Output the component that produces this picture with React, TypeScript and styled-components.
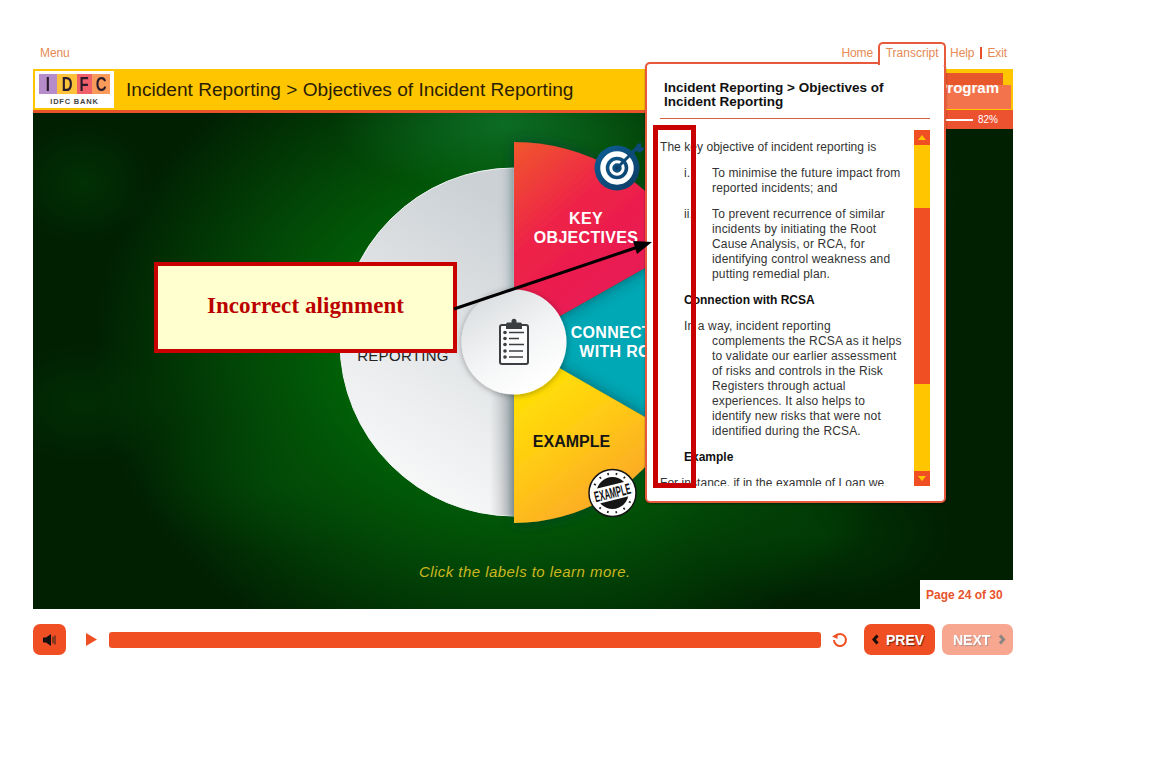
import React from "react";
import styled, { createGlobalStyle } from "styled-components";

const Global = createGlobalStyle`
  html, body { margin: 0; padding: 0; background: #fff; }
  body { font-family: "Liberation Sans", Arial, sans-serif; overflow: hidden; }
`;

const Shell = styled.div`
  position: relative;
  width: 980px;
  height: 763px;
  margin-left: 33px;
  display: flex;
  flex-direction: column;
`;

const TopNav = styled.nav`
  height: 69px;
  box-sizing: border-box;
  padding: 42px 6px 0 7px;
  display: flex;
  justify-content: space-between;
  align-items: flex-start;
`;

const NavGroup = styled.div`
  display: flex;
  align-items: flex-start;
  position: relative;
  z-index: 4;
`;

const NavLink = styled.a<{ $divider?: boolean }>`
  font-size: 12px;
  line-height: 14px;
  padding-top: 4px;
  color: #e58a55;
  letter-spacing: -0.1px;
  ${(p) => p.$divider && `
    padding: 0 0 0 5px;
    margin-top: 5px;
    margin-left: 6px;
    border-left: 2px solid #e8502a;
    line-height: 12px;
  `}
`;

const TranscriptTab = styled.a`
  box-sizing: border-box;
  width: 68px;
  height: 23px;
  margin: 0 4px 0 5px;
  padding-top: 1px;
  text-align: center;
  font-size: 12px;
  line-height: 17px;
  color: #e58a55;
  background: #fff;
  border: 2px solid #e8583a;
  border-bottom: 0;
  border-radius: 5px 5px 0 0;
`;

const Header = styled.header`
  height: 44px;
  box-sizing: border-box;
  background: #ffc600;
  border-bottom: 3px solid #e8532c;
  padding: 2px;
  display: flex;
  align-items: stretch;
`;

const Logo = styled.div`
  width: 79px;
  background: #fff;
  box-sizing: border-box;
  padding: 3px 4px 0;
  display: flex;
  flex-direction: column;
  align-items: center;
`;

const LogoBlocks = styled.div`
  width: 71px;
  height: 20px;
  display: flex;
`;

const LogoBlock = styled.span<{ $bg: string; $w: number }>`
  width: ${(p) => p.$w}px;
  background: ${(p) => p.$bg};
  display: flex;
  justify-content: center;
`;

const LogoLetter = styled.span`
  display: block;
  color: #2a1a2a;
  font-size: 20px;
  font-weight: 700;
  line-height: 20px;
  transform: scaleX(0.75);
`;

const LogoName = styled.span`
  font-size: 7.5px;
  font-weight: 700;
  line-height: 9px;
  margin-top: 3px;
  letter-spacing: 0.8px;
  color: #444;
`;

const Title = styled.h1`
  margin: 0 0 0 12px;
  padding-top: 1px;
  flex: 1;
  font-size: 19.1px;
  font-weight: 400;
  line-height: 36px;
  color: #2b1d05;
`;

const ProgramTag = styled.div`
  width: 78px;
  height: 36px;
  margin-top: 2px;
  text-align: right;
  padding-right: 12px;
  box-sizing: border-box;
  font-size: 15px;
  font-weight: 700;
  line-height: 29px;
  color: #fff;
  background:
    linear-gradient(#e8562c, #e8562c) 0 0 / 70px 12px no-repeat,
    linear-gradient(#f2734c, #f2734c) 0 12px / 100% 100% no-repeat;
`;

const Stage = styled.main`
  position: relative;
  height: 496px;
  overflow: hidden;
  background:
    radial-gradient(ellipse 170px 70px at 470px 10px, rgba(20, 140, 60, 0.55), transparent),
    radial-gradient(ellipse 70px 60px at 50px 70px, rgba(0, 80, 8, 0.35), transparent),
    radial-gradient(ellipse 90px 60px at 50px 290px, rgba(0, 80, 8, 0.28), transparent),
    radial-gradient(ellipse 130px 70px at 240px 370px, rgba(0, 90, 8, 0.25), transparent),
    radial-gradient(ellipse 130px 70px at 790px 420px, rgba(0, 100, 10, 0.3), transparent),
    radial-gradient(ellipse 110px 90px at 820px 70px, rgba(0, 80, 8, 0.25), transparent),
    radial-gradient(ellipse 420px 340px at 480px 235px, #006a08 0%, #005f07 42%, #024a07 62%, transparent 100%),
    #012002;
`;

const Wheel = styled.svg`
  position: absolute;
  left: 0;
  top: 0;
`;

const WheelLabel = styled.div<{ $x: number; $y: number; $color: string; $weight?: number; $size?: number; $ls?: number }>`
  position: absolute;
  left: ${(p) => p.$x}px;
  top: ${(p) => p.$y}px;
  width: 140px;
  text-align: center;
  font-size: ${(p) => p.$size ?? 16}px;
  line-height: 19px;
  font-weight: ${(p) => p.$weight ?? 700};
  letter-spacing: ${(p) => p.$ls ?? 0.3}px;
  color: ${(p) => p.$color};
`;

const Hint = styled.div`
  position: absolute;
  left: 386px;
  top: 450px;
  font-size: 15px;
  line-height: 18px;
  font-style: italic;
  letter-spacing: 0.45px;
  color: #cdb71f;
`;

const PageBadge = styled.div`
  position: absolute;
  right: 0;
  bottom: 0;
  width: 93px;
  height: 29px;
  box-sizing: border-box;
  padding: 8px 0 0 6px;
  background: #fff;
  color: #e8532c;
  font-size: 12px;
  line-height: 14px;
  font-weight: 700;
`;

const ProgressStrip = styled.div`
  position: absolute;
  left: 912px;
  top: 111px;
  width: 68px;
  height: 18px;
  background: #ec5130;
  color: #fff;
  font-size: 10px;
  line-height: 18px;
  padding-right: 15px;
  box-sizing: border-box;
  display: flex;
  justify-content: flex-end;
  align-items: center;
  gap: 5px;
`;

const ProgressLine = styled.span`
  width: 27px;
  height: 2px;
  background: #fff;
`;

const Controls = styled.footer`
  margin-top: 15px;
  display: flex;
  align-items: center;
  height: 31px;
`;

const MuteButton = styled.button`
  width: 33px;
  height: 31px;
  padding: 0;
  border: 0;
  border-radius: 7px;
  background: #f04f23;
  display: flex;
  align-items: center;
  justify-content: center;
`;

const PlayIcon = styled.svg`
  margin-left: 20px;
  margin-right: 12px;
`;

const SeekBar = styled.div`
  flex: 0 0 712px;
  height: 16px;
  border-radius: 3px;
  background: #f04f23;
`;

const ReloadIcon = styled.svg`
  margin: 0 16px 0 11px;
`;

const NavButton = styled.button<{ $off?: boolean }>`
  width: 71px;
  height: 31px;
  margin-left: ${(p) => (p.$off ? 7 : 0)}px;
  padding: 0 0 0 ${(p) => (p.$off ? 11 : 8)}px;
  border: 0;
  border-radius: 7px;
  background: #f04f23;
  opacity: ${(p) => (p.$off ? 0.5 : 1)};
  display: flex;
  align-items: center;
  gap: ${(p) => (p.$off ? 8 : 7)}px;
  font-family: inherit;
  font-size: 14px;
  font-weight: 700;
  color: #fff;
  text-shadow: 1px 1px 1px rgba(0, 0, 0, 0.55);
`;

const Popup = styled.aside`
  position: absolute;
  left: 612px;
  top: 62px;
  z-index: 3;
  width: 301px;
  height: 441px;
  box-sizing: border-box;
  border: 2px solid #e8583a;
  border-radius: 5px;
  background: #fff;
  box-shadow: 0 1px 2px rgba(0, 0, 0, 0.4);
  padding: 17px 14px 0 13px;
`;

const PopupTitle = styled.h2`
  margin: 0;
  padding: 0 0 9px 4px;
  border-bottom: 1px solid #d2603c;
  font-size: 13.5px;
  line-height: 14px;
  font-weight: 700;
  color: #111;
`;

const PopupBody = styled.div`
  margin-top: 11px;
  display: flex;
  height: 356px;
`;

const TextPane = styled.div`
  flex: 1;
  overflow: hidden;
  font-size: 12px;
  line-height: 15px;
  letter-spacing: 0.15px;
  color: #333;
`;

const Para = styled.p`
  margin: 10px 0 11px;
  letter-spacing: 0.05px;
`;

const ListItem = styled.div`
  display: flex;
  margin: 0 10px 11px 24px;
`;

const ListMark = styled.span`
  flex: 0 0 28px;
`;

const SubHead = styled.p`
  margin: 0 0 11px 24px;
  font-weight: 700;
  letter-spacing: 0;
  color: #111;
`;

const Hanging = styled.p`
  margin: 0 10px 11px 52px;
  text-indent: -28px;
`;

const Scroll = styled.div`
  width: 16px;
  display: flex;
  flex-direction: column;
  background: #ffc600;
`;

const ScrollArrow = styled.div<{ $down?: boolean }>`
  height: 15px;
  background: #f04f23;
  display: flex;
  align-items: center;
  justify-content: center;
  margin-top: ${(p) => (p.$down ? "auto" : 0)};
  &::after {
    content: "";
    border-left: 4px solid transparent;
    border-right: 4px solid transparent;
    ${(p) => (p.$down ? "border-top: 5px solid #ffc600;" : "border-bottom: 5px solid #ffc600;")}
  }
`;

const ScrollThumb = styled.div`
  height: 176px;
  margin-top: 63px;
  background: #f04f23;
`;

const CalloutBox = styled.div`
  position: absolute;
  left: 121px;
  top: 262px;
  z-index: 5;
  width: 303px;
  height: 91px;
  box-sizing: border-box;
  border: 4px solid #c80000;
  background: #ffffcf;
  padding-bottom: 4px;
  display: flex;
  align-items: center;
  justify-content: center;
  font-family: "Liberation Serif", "Times New Roman", serif;
  font-size: 23px;
  font-weight: 700;
  letter-spacing: 0.08px;
  color: #bb0000;
`;

const Highlight = styled.div`
  position: absolute;
  left: 620px;
  top: 125px;
  z-index: 5;
  width: 43px;
  height: 363px;
  box-sizing: border-box;
  border: 5px solid #c80000;
`;

const Arrow = styled.svg`
  position: absolute;
  left: 0;
  top: 0;
  z-index: 6;
  pointer-events: none;
`;

const logoBlocks = [
  { l: "I", bg: "#b58bc9", w: 18 },
  { l: "D", bg: "#fcc23a", w: 20 },
  { l: "F", bg: "#f0606a", w: 15 },
  { l: "C", bg: "#f79a5a", w: 18 },
];

const CX = 481;
const CY = 229;

function WheelArt() {
  return (
    <Wheel width="980" height="496" viewBox="0 0 980 496">
      <defs>
        <linearGradient id="gray" x1="0.6" y1="0" x2="0.3" y2="1">
          <stop offset="0" stopColor="#ccd1d5" />
          <stop offset="0.45" stopColor="#e2e5e7" />
          <stop offset="1" stopColor="#fcfcfc" />
        </linearGradient>
        <linearGradient id="grayEdge" x1="0" y1="0" x2="1" y2="0">
          <stop offset="0" stopColor="#8a8f93" stopOpacity="0" />
          <stop offset="1" stopColor="#8a8f93" stopOpacity="0.6" />
        </linearGradient>
        <linearGradient id="red" x1="0" y1="0" x2="0.55" y2="0.75">
          <stop offset="0" stopColor="#f0582c" />
          <stop offset="0.5" stopColor="#ee2248" />
          <stop offset="1" stopColor="#e81a54" />
        </linearGradient>
        <linearGradient id="yellow" x1="0.05" y1="0.2" x2="0.55" y2="1">
          <stop offset="0" stopColor="#ffe400" />
          <stop offset="0.5" stopColor="#ffc815" />
          <stop offset="1" stopColor="#fba52a" />
        </linearGradient>
        <linearGradient id="hub" x1="0" y1="0" x2="0.6" y2="1">
          <stop offset="0" stopColor="#d4d8db" />
          <stop offset="0.6" stopColor="#f3f4f5" />
          <stop offset="1" stopColor="#ffffff" />
        </linearGradient>
        <filter id="drop" x="-30%" y="-30%" width="160%" height="160%">
          <feDropShadow dx="0" dy="0" stdDeviation="7" floodColor="#00363c" floodOpacity="0.6" />
        </filter>
        <filter id="soft" x="-30%" y="-30%" width="160%" height="160%">
          <feDropShadow dx="0" dy="1" stdDeviation="3" floodColor="#000" floodOpacity="0.35" />
        </filter>
        <linearGradient id="targetBlue" x1="0" y1="0" x2="1" y2="1">
          <stop offset="0" stopColor="#0d5f96" />
          <stop offset="1" stopColor="#0c3c64" />
        </linearGradient>
      </defs>

      <path d={`M${CX} ${CY - 174}A174 174 0 0 0 ${CX} ${CY + 174}Z`} fill="url(#gray)" stroke="#f4f6f7" strokeWidth="1" />
      <path d={`M${CX - 24} ${CY + 40}H${CX}V${CY + 174}L${CX - 24} ${CY + 172}Z`} fill="url(#grayEdge)" />
      <path d={`M${CX} ${CY}L${CX + 165.4} ${CY - 93.4}A190 190 0 0 1 ${CX + 165.4} ${CY + 94.7}Z`} fill="#00a7b4" />
      <path d={`M${CX} ${CY}V${CY - 200}A200 200 0 0 1 ${CX + 174.2} ${CY - 98.4}Z`} fill="url(#red)" filter="url(#drop)" />
      <path d={`M${CX} ${CY}L${CX + 157.2} ${CY + 90}A181 181 0 0 1 ${CX} ${CY + 181}Z`} fill="url(#yellow)" filter="url(#drop)" />
      <circle cx={CX} cy={CY} r="52.5" fill="url(#hub)" filter="url(#soft)" />

      {/* clipboard */}
      <g transform="translate(466 205)" fill="none" stroke="#3c3f42">
        <rect x="1" y="7" width="28" height="39" rx="2" strokeWidth="2" fill="#fbfbfb" />
        <path d="M7 11V6.5C7 5 8 4.5 9 4.5H12.5V3.2a2.5 2.5 0 0 1 5 0V4.5H21C22 4.5 23 5 23 6.5V11Z" fill="#3c3f42" stroke="none" />
        <g fill="#3c3f42" stroke="none">
          <circle cx="6" cy="14.5" r="1.8" />
          <circle cx="6" cy="20.5" r="1.8" />
          <circle cx="6" cy="26.5" r="1.8" />
          <circle cx="6" cy="33" r="1.8" />
          <circle cx="6" cy="39" r="1.8" />
        </g>
        <path d="M10 14.5H25M10 20.5H20M10 26.5H25M10 33H24M10 39H24" strokeWidth="1.5" />
      </g>

      {/* target */}
      <g transform="translate(584 55)">
        <path d="M8 -8L23 -23" stroke="#0d4a78" strokeWidth="3.5" />
        <path d="M18 -18L20 -24L24 -25L24 -21L28 -20L23 -15Z" fill="#0d4a78" />
        <circle r="22.5" fill="url(#targetBlue)" />
        <circle r="14" fill="none" stroke="#fff" strokeWidth="5.5" />
        <circle r="6.2" fill="none" stroke="#fff" strokeWidth="3" />
        <path d="M0 0L17 -17" stroke="#0d4a78" strokeWidth="3" />
        <circle r="1.8" fill="#0c3c64" />
      </g>

      {/* example stamp */}
      <g transform="translate(579.5 380)">
        <circle r="23.5" fill="#fff" />
        <circle r="23.5" fill="none" stroke="#151515" strokeWidth="1.5" />
        <circle r="19.5" fill="none" stroke="#222" strokeWidth="2.2" strokeDasharray="1.6 7" />
        <circle r="16" fill="#151515" />
        <g transform="rotate(-14)">
          <rect x="-20" y="-8" width="40" height="15" fill="#fff" />
          <text
            x="0"
            y="5"
            textAnchor="middle"
            textLength="37"
            lengthAdjust="spacingAndGlyphs"
            fontFamily="'Liberation Sans', sans-serif"
            fontWeight="700"
            fontSize="15"
            fill="#111"
          >
            EXAMPLE
          </text>
        </g>
      </g>
    </Wheel>
  );
}

export default function App() {
  return (
    <>
      <Global />
      <Shell>
        <TopNav>
          <NavGroup>
            <NavLink>Menu</NavLink>
          </NavGroup>
          <NavGroup>
            <NavLink>Home</NavLink>
            <TranscriptTab>Transcript</TranscriptTab>
            <NavLink>Help</NavLink>
            <NavLink $divider>Exit</NavLink>
          </NavGroup>
        </TopNav>

        <Header>
          <Logo>
            <LogoBlocks>
              {logoBlocks.map((b) => (
                <LogoBlock key={b.l} $bg={b.bg} $w={b.w}>
                  <LogoLetter>{b.l}</LogoLetter>
                </LogoBlock>
              ))}
            </LogoBlocks>
            <LogoName>IDFC BANK</LogoName>
          </Logo>
          <Title>Incident Reporting &gt; Objectives of Incident Reporting</Title>
          <ProgramTag>Program</ProgramTag>
        </Header>

        <Stage>
          <WheelArt />
          <WheelLabel $x={300} $y={214} $color="#222" $weight={400} $size={15}>
            INCIDENT
            <br />
            REPORTING
          </WheelLabel>
          <WheelLabel $x={483} $y={96} $color="#fff">
            KEY
            <br />
            OBJECTIVES
          </WheelLabel>
          <WheelLabel $x={523} $y={210} $color="#fff">
            CONNECTION
            <br />
            WITH RCSA
          </WheelLabel>
          <WheelLabel $x={468.5} $y={319} $color="#151515" $ls={0}>
            EXAMPLE
          </WheelLabel>
          <Hint>Click the labels to learn more.</Hint>
          <PageBadge>Page 24 of 30</PageBadge>
        </Stage>

        <Controls>
          <MuteButton aria-label="Mute">
            <svg width="16" height="16" viewBox="0 0 16 16">
              <path d="M1 5.5H4L9 2V14L4 10.5H1Z" fill="#111" />
              <path d="M11 4.5V11.5M13 3.5V12.5" stroke="#222" strokeWidth="1" />
            </svg>
          </MuteButton>
          <PlayIcon width="11" height="13" viewBox="0 0 11 13">
            <path d="M0 0L11 6.5L0 13Z" fill="#f04f23" />
          </PlayIcon>
          <SeekBar />
          <ReloadIcon width="16" height="16" viewBox="0 0 16 16">
            <path d="M3.2 4.4A6 6 0 1 1 2 8" fill="none" stroke="#f04f23" strokeWidth="2" />
            <path d="M0 4.5L5.5 1.5V7Z" fill="#f04f23" />
          </ReloadIcon>
          <NavButton>
            <svg width="7" height="11" viewBox="0 0 7 11">
              <path d="M5.5 1.5L2 5.5L5.5 9.5" fill="none" stroke="#1a0f0a" strokeWidth="3" />
            </svg>
            PREV
          </NavButton>
          <NavButton $off>
            NEXT
            <svg width="8" height="11" viewBox="0 0 8 11">
              <path d="M2 1.5L5.5 5.5L2 9.5" fill="none" stroke="#1a0f0a" strokeWidth="3" />
            </svg>
          </NavButton>
        </Controls>

        <Popup>
          <PopupTitle>
            Incident Reporting &gt; Objectives of
            <br />
            Incident Reporting
          </PopupTitle>
          <PopupBody>
            <TextPane>
              <Para>The key objective of incident reporting is</Para>
              <ListItem>
                <ListMark>i.</ListMark>
                <span>To minimise the future impact from reported incidents; and</span>
              </ListItem>
              <ListItem>
                <ListMark>ii.</ListMark>
                <span>
                  To prevent recurrence of similar incidents by initiating the Root Cause Analysis, or RCA, for
                  identifying control weakness and putting remedial plan.
                </span>
              </ListItem>
              <SubHead>Connection with RCSA</SubHead>
              <Hanging>
                In a way, incident reporting
                <br />
                complements the RCSA as it helps to validate our earlier assessment of risks and controls in the Risk
                Registers through actual experiences. It also helps to identify new risks that were not identified
                during the RCSA.
              </Hanging>
              <SubHead>Example</SubHead>
              <Para>For instance, if in the example of Loan we</Para>
            </TextPane>
            <Scroll>
              <ScrollArrow />
              <ScrollThumb />
              <ScrollArrow $down />
            </Scroll>
          </PopupBody>
        </Popup>

        <ProgressStrip>
          <ProgressLine />
          82%
        </ProgressStrip>

        <CalloutBox>Incorrect alignment</CalloutBox>
        <Highlight />
        <Arrow width="980" height="763" viewBox="0 0 980 763">
          <path d="M421 309L605 247" stroke="#000" strokeWidth="3" fill="none" />
          <path d="M619 242L600 241L604 254Z" fill="#000" />
        </Arrow>
      </Shell>
    </>
  );
}
